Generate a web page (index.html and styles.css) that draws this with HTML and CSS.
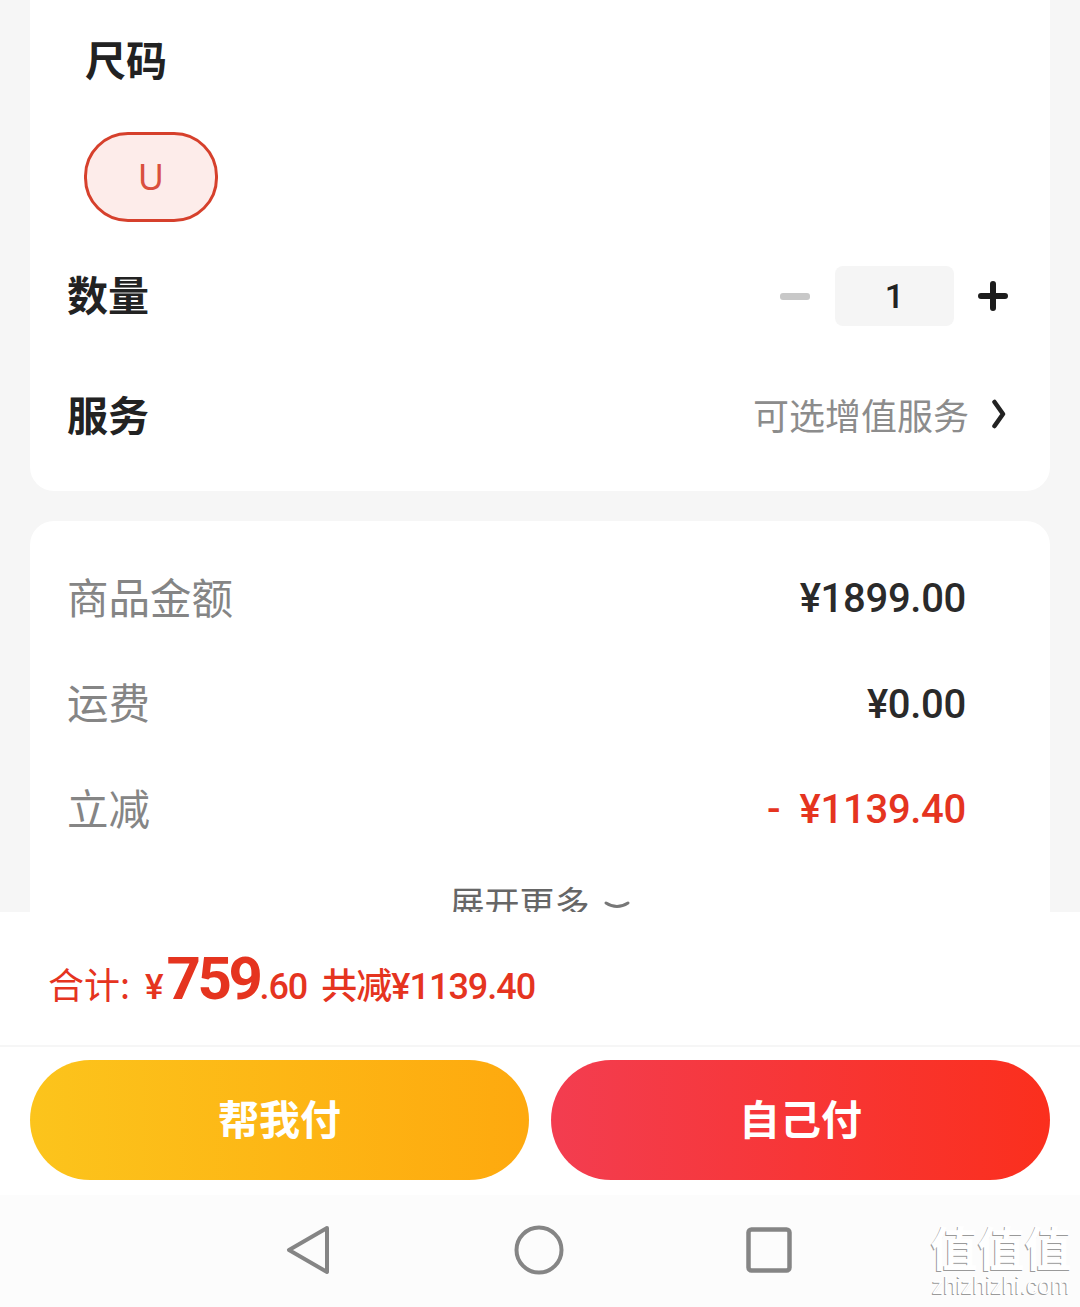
FILE: index.html
```html
<!DOCTYPE html>
<html>
<head>
    <title>确认订单</title>
    <link rel="stylesheet" href="styles.css">
</head>
<body>
    <div class="scroll">
        <div class="card card-top">
            <div class="size-title">尺码</div>
            <div class="size-chip">U</div>
            <div class="row row-qty">
                <div class="row-title">数量</div>
                <div class="stepper">
                    <span class="minus"></span>
                    <span class="qty">1</span>
                    <svg class="plus" width="32" height="32" viewBox="0 0 32 32"><path d="M16 4v24M4 16h24" stroke="#1c1c1c" stroke-width="6" stroke-linecap="round"/></svg>
                </div>
            </div>
            <div class="row row-service">
                <div class="row-title">服务</div>
                <div class="service-right">
                    <span class="service-hint">可选增值服务</span>
                    <svg class="chevron" width="16" height="30" viewBox="0 0 16 30"><path d="M3.500 3 12 15 3.500 27" fill="none" stroke="#222" stroke-width="4.500" stroke-linejoin="round" stroke-linecap="round"/></svg>
                </div>
            </div>
        </div>
        <div class="card card-price">
            <div class="price-row">
                <span class="price-label">商品金额</span>
                <span class="price-value">¥1899.00</span>
            </div>
            <div class="price-row">
                <span class="price-label">运费</span>
                <span class="price-value">¥0.00</span>
            </div>
            <div class="price-row">
                <span class="price-label">立减</span>
                <span class="price-value red">-&nbsp; ¥1139.40</span>
            </div>
            <div class="more">
                <span>展开更多</span>
                <svg class="more-arrow" width="26" height="12" viewBox="0 0 26 12"><path d="M2 3q11 7 22 0" fill="none" stroke="#777" stroke-width="3" stroke-linecap="round"/></svg>
            </div>
        </div>
    </div>
    <div class="total-bar">
        <span class="total-label">合计:</span>
        <span class="total-yen">¥</span><span class="total-big">759</span><span class="total-cents">.60</span>
        <span class="total-off">共减¥1139.40</span>
    </div>
    <div class="pay-bar">
        <div class="pay-btn pay-yellow">帮我付</div>
        <div class="pay-btn pay-red">自己付</div>
    </div>
    <div class="nav-bar">
        <svg width="46" height="50" viewBox="0 0 46 50"><path d="M41 3 3 25l38 22z" fill="none" stroke="#858585" stroke-width="4" stroke-linejoin="round"/></svg>
        <svg width="50" height="50" viewBox="0 0 50 50"><circle cx="25" cy="25" r="22.500" fill="none" stroke="#858585" stroke-width="4"/></svg>
        <svg width="46" height="46" viewBox="0 0 46 46"><rect x="2.500" y="2.500" width="41" height="41" rx="3" fill="none" stroke="#858585" stroke-width="4.500"/></svg>
    </div>
    <div class="watermark">
        <div class="wm-title">值值值</div>
        <div class="wm-url">zhizhizhi.com</div>
    </div>
</body>
</html>
```

FILE: styles.css
```css
* {
    box-sizing: border-box;
}
body {
    margin: 0;
    width: 1080px;
    height: 1307px;
    overflow: hidden;
    position: relative;
    background: #fff;
    font-family: "Noto Sans CJK SC", "Noto Sans", sans-serif;
    color: #222;
}
.scroll {
    height: 912px;
    overflow: hidden;
    background: #f6f6f6;
    padding: 0 30px;
}
.card {
    background: #fff;
    border-radius: 0 0 24px 24px;
}
.card-top {
    height: 491px;
    padding: 0 41px 0 37px;
}
.size-title {
    padding: 29px 0 0 18px;
    font-size: 41px;
    font-weight: 700;
    line-height: 58px;
}
.size-chip {
    width: 134px;
    height: 90px;
    margin: 45px 0 0 17px;
    border: 3px solid #d6402c;
    border-radius: 44px;
    background: #fdecea;
    color: #d9503f;
    font-family: "Noto Sans", sans-serif;
    font-size: 36px;
    line-height: 84px;
    text-align: center;
}
.row {
    display: flex;
    justify-content: space-between;
    align-items: center;
}
.row-qty {
    margin-top: 44px;
    height: 60px;
}
.row-service {
    margin-top: 60px;
    height: 60px;
}
.row-title {
    padding-bottom: 6px;
    font-size: 41px;
    font-weight: 700;
}
.stepper {
    display: flex;
    align-items: center;
}
.minus {
    width: 30px;
    height: 7px;
    border-radius: 3px;
    background: #c8c8c8;
    margin-right: 25px;
}
.qty {
    width: 119px;
    height: 60px;
    border-radius: 8px;
    background: #f5f5f5;
    font-family: Roboto, sans-serif;
    font-size: 34px;
    font-weight: 500;
    line-height: 60px;
    text-align: center;
}
.plus {
    margin-left: 23px;
}
.service-right {
    display: flex;
    align-items: center;
    padding-bottom: 5px;
}
.service-hint {
    font-size: 36px;
    color: #8c8c8c;
}
.chevron {
    margin: 0 2px 0 22px;
}
.card-price {
    margin-top: 30px;
    height: 420px;
    border-radius: 24px;
    padding: 26px 84px 0 37px;
}
.price-row {
    display: flex;
    justify-content: space-between;
    align-items: center;
    height: 105.500px;
}
.price-label {
    padding-bottom: 8px;
    font-size: 41.500px;
    color: #858585;
}
.price-value {
    padding-bottom: 2px;
    font-family: Roboto, sans-serif;
    font-size: 40px;
    font-weight: 500;
    letter-spacing: -0.300px;
    color: #2a2a2a;
}
.red {
    color: #e5341f;
}
.more {
    display: flex;
    justify-content: center;
    align-items: center;
    gap: 14px;
    padding-left: 46px;
    margin-top: 12px;
    font-size: 35px;
    color: #666;
}
.more-arrow {
    margin-top: 10px;
}
.total-bar {
    height: 135px;
    padding: 30px 0 0 48px;
    border-bottom: 2px solid #f6f6f6;
    display: flex;
    align-items: baseline;
    color: #e5341f;
    font-family: Roboto, "Noto Sans CJK SC", sans-serif;
}
.total-label {
    font-family: "Noto Sans CJK SC", sans-serif;
    font-size: 36px;
    margin-right: 15px;
}
.total-yen {
    font-size: 35px;
    font-weight: 500;
}
.total-big {
    font-size: 60px;
    font-weight: 700;
    line-height: 74px;
    letter-spacing: -3.500px;
    margin-left: 3px;
}
.total-cents {
    font-size: 36px;
    font-weight: 500;
    letter-spacing: -1px;
}
.total-off {
    font-size: 36px;
    font-weight: 500;
    letter-spacing: -1px;
    margin-left: 14px;
}
.pay-bar {
    height: 148px;
    padding: 13px 30px 0;
    display: flex;
    gap: 22px;
}
.pay-btn {
    width: 499px;
    height: 120px;
    border-radius: 60px;
    color: #fff;
    font-size: 41px;
    font-weight: 700;
    line-height: 114px;
    text-align: center;
}
.pay-yellow {
    background: linear-gradient(90deg, #fcc41c, #fea90e);
}
.pay-red {
    background: linear-gradient(90deg, #f33d50, #fb2f1d);
}
.nav-bar {
    height: 112px;
    background: #fcfcfc;
    padding: 0 288px 3px 286px;
    display: flex;
    justify-content: space-between;
    align-items: center;
}
.watermark {
    position: absolute;
    right: 7px;
    bottom: 8px;
    width: 144px;
    text-align: center;
    color: #fff;
    text-shadow: -1px 1px 0 #9a9a9a;
}
.wm-title {
    font-size: 47px;
    font-weight: 700;
    line-height: 54px;
}
.wm-url {
    font-family: "Liberation Sans", sans-serif;
    font-size: 23px;
    line-height: 26px;
}
```
